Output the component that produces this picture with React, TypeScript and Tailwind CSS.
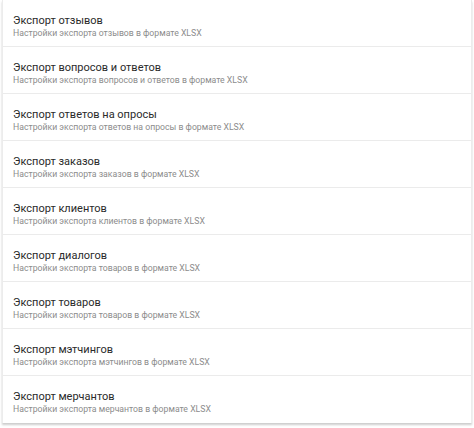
const items = [
  { title: "Экспорт отзывов", subtitle: "Настройки экспорта отзывов в формате XLSX" },
  { title: "Экспорт вопросов и ответов", subtitle: "Настройки экспорта вопросов и ответов в формате XLSX" },
  { title: "Экспорт ответов на опросы", subtitle: "Настройки экспорта ответов на опросы в формате XLSX" },
  { title: "Экспорт заказов", subtitle: "Настройки экспорта заказов в формате XLSX" },
  { title: "Экспорт клиентов", subtitle: "Настройки экспорта клиентов в формате XLSX" },
  { title: "Экспорт диалогов", subtitle: "Настройки экспорта товаров в формате XLSX" },
  { title: "Экспорт товаров", subtitle: "Настройки экспорта товаров в формате XLSX" },
  { title: "Экспорт мэтчингов", subtitle: "Настройки экспорта мэтчингов в формате XLSX" },
  { title: "Экспорт мерчантов", subtitle: "Настройки экспорта мерчантов в формате XLSX" },
];

export default function App() {
  return (
    <div className="h-[428px] w-[474px] bg-white pl-[2px] pr-[2px] font-['Roboto',sans-serif]">
      <div className="border-x border-[#ececec] bg-white shadow-[0_2px_2px_rgba(0,0,0,0.2)]">
        {items.map((item, i) => (
          <div
            key={i}
            className={`flex h-[47px] flex-col justify-center px-[10px] pt-[7px] ${
              i < items.length - 1 ? "border-b border-[#ebebeb]" : ""
            }`}
          >
            <div className="text-[11px] leading-[12px] text-[#2a2a2a]">{item.title}</div>
            <div className="text-[8.7px] leading-[12px] text-[#8c8c8c]">{item.subtitle}</div>
          </div>
        ))}
      </div>
    </div>
  );
}
